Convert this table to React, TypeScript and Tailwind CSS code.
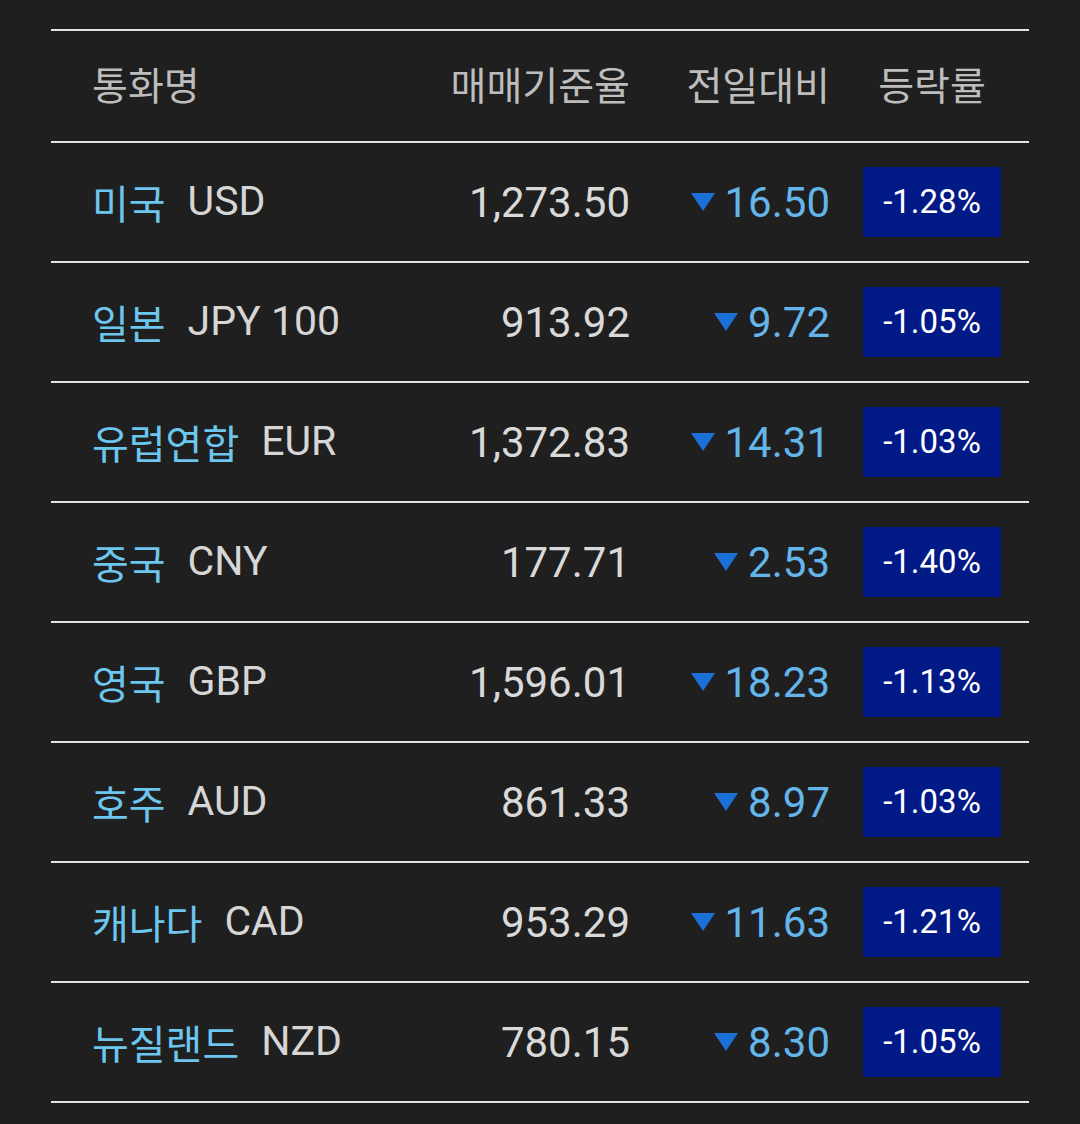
const rows = [
  { name: '미국', code: 'USD', rate: '1,273.50', diff: '16.50', pct: '-1.28%' },
  { name: '일본', code: 'JPY 100', rate: '913.92', diff: '9.72', pct: '-1.05%' },
  { name: '유럽연합', code: 'EUR', rate: '1,372.83', diff: '14.31', pct: '-1.03%' },
  { name: '중국', code: 'CNY', rate: '177.71', diff: '2.53', pct: '-1.40%' },
  { name: '영국', code: 'GBP', rate: '1,596.01', diff: '18.23', pct: '-1.13%' },
  { name: '호주', code: 'AUD', rate: '861.33', diff: '8.97', pct: '-1.03%' },
  { name: '캐나다', code: 'CAD', rate: '953.29', diff: '11.63', pct: '-1.21%' },
  { name: '뉴질랜드', code: 'NZD', rate: '780.15', diff: '8.30', pct: '-1.05%' },
];

function DownArrow() {
  return (
    <svg width="24" height="18" viewBox="0 0 24 18" className="mr-[10px] shrink-0">
      <path d="M0 0 H24 L12 18 Z" fill="#1c6fd6" />
    </svg>
  );
}

export default function App() {
  return (
    <div className="min-h-[1124px] bg-[#1f1f1f] pt-[29px] font-['Roboto','Noto_Sans_CJK_KR',sans-serif]">
      <div className="ml-[51px] w-[978px] border-t-2 border-[#e2e2e2]">
        <div className="flex h-[112px] items-center border-b-2 border-[#e2e2e2] pb-[6px] pl-[41px] pr-[28px] font-['Noto_Sans_CJK_KR',sans-serif] text-[39px] text-[#bdbdbd]">
          <span className="flex-1">통화명</span>
          <span className="w-[200px] text-right">매매기준율</span>
          <span className="w-[200px] text-right">전일대비</span>
          <span className="ml-[33px] w-[138px] text-center">등락률</span>
        </div>

        {rows.map((r) => (
          <div
            key={r.code}
            className="flex h-[120px] items-center border-b-2 border-[#e2e2e2] pl-[41px] pr-[28px] text-[42px]"
          >
            <div className="flex flex-1 items-center">
              <span className="font-['Noto_Sans_CJK_KR',sans-serif] text-[40px] text-[#6cc6ee]">
                {r.name}
              </span>
              <span className="ml-[22px] text-[41px] text-[#d6d6d6]">{r.code}</span>
            </div>
            <span className="w-[200px] text-right text-[#d9d9d9]">{r.rate}</span>
            <div className="flex w-[200px] items-center justify-end">
              <DownArrow />
              <span className="text-[#64b5ea]">{r.diff}</span>
            </div>
            <div className="ml-[33px] flex h-[70px] w-[138px] items-center justify-center bg-[#021a85] text-[33px] text-white">
              {r.pct}
            </div>
          </div>
        ))}
      </div>
    </div>
  );
}
